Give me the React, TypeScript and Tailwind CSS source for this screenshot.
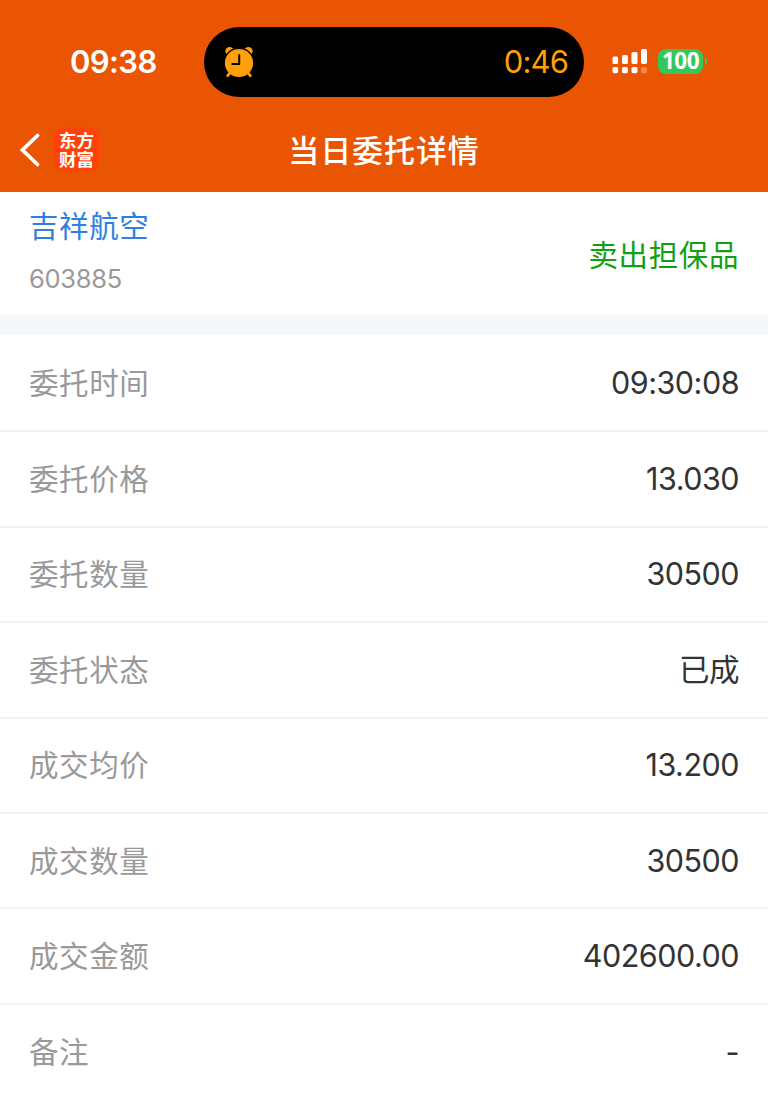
type Detail = {
  label: string;
  value: string;
};

const details: Detail[] = [
  { label: "委托时间", value: "09:30:08" },
  { label: "委托价格", value: "13.030" },
  { label: "委托数量", value: "30500" },
  { label: "委托状态", value: "已成" },
  { label: "成交均价", value: "13.200" },
  { label: "成交数量", value: "30500" },
  { label: "成交金额", value: "402600.00" },
  { label: "备注", value: "-" },
];

function AlarmIcon() {
  return (
    <svg className="h-8 w-8" viewBox="0 0 32 32" fill="none">
      <circle cx="6.6" cy="5.2" r="4.2" fill="#ff9f0a" />
      <circle cx="25.4" cy="5.2" r="4.2" fill="#ff9f0a" />
      <circle cx="16" cy="17" r="15.4" fill="#000" />
      <path d="M6.8 27.2 4.7 29.6M25.2 27.2l2.1 2.4" stroke="#ff9f0a" strokeWidth="2.8" strokeLinecap="round" />
      <circle cx="16" cy="17" r="14.1" fill="#ff9f0a" />
      <path d="M16.2 9v9H9.3" stroke="#000" strokeWidth="2" strokeLinecap="round" strokeLinejoin="round" />
    </svg>
  );
}

function SignalIcon() {
  return (
    <svg className="h-[26px] w-9" viewBox="0 0 36 26" fill="#fff">
      <rect x="0.5" y="8.5" width="5.6" height="7.5" rx="1.6" />
      <rect x="10" y="7" width="5.9" height="9" rx="1.6" />
      <rect x="19.5" y="4" width="6" height="12" rx="1.6" />
      <rect x="29" y="1" width="6" height="15" rx="1.8" />
      <rect x="0.5" y="18.9" width="5.6" height="6.3" rx="1.6" />
      <rect x="10" y="18.9" width="5.9" height="6.3" rx="1.6" />
      <rect x="19.5" y="18.9" width="6" height="6.3" rx="1.6" />
      <rect x="29" y="18.9" width="6" height="6.3" rx="1.6" opacity="0.3" />
    </svg>
  );
}

function StatusBar() {
  return (
    <div className="flex h-[124px] items-center">
      <p className="ml-[70px] w-[134px] pb-[2px] text-[31px] leading-none font-semibold tracking-[-0.6px]">09:38</p>
      <div className="flex h-[70px] w-[380px] items-center justify-between rounded-full bg-black pr-[16px] pl-[19px]">
        <AlarmIcon />
        <p className="pb-px text-[31px] leading-none tracking-[-0.9px] text-[#ff9f0a]">0:46</p>
      </div>
      <div className="ml-7 flex items-center">
        <div className="-mt-[2px]">
          <SignalIcon />
        </div>
        <div className="-mt-px ml-[10px] flex h-[25px] w-[45px] items-center justify-center rounded-[8px] bg-[#34c759] pb-px font-['Noto_Sans',sans-serif] text-[22.5px] leading-[22px] font-bold tracking-[-0.6px]">
          100
        </div>
        <div className="-mt-px ml-[2px] h-[7px] w-[2px] rounded-r-full bg-[#34c759]"></div>
      </div>
    </div>
  );
}

function NavBar() {
  return (
    <div className="grid h-[68px] grid-cols-[1fr_auto_1fr] items-start">
      <div className="flex items-center pt-[4px] pl-[19px]">
        <svg className="h-9 w-[22px]" viewBox="0 0 22 36" fill="none">
          <path d="M18.5 3.5 3.5 18 18.5 32.5" stroke="#fff" strokeWidth="3.8" strokeLinecap="round" strokeLinejoin="miter" />
        </svg>
        <div className="-mt-px ml-[13px] flex h-11 w-[45px] flex-col items-center justify-center rounded-[9px] bg-[#ff4209] font-['Noto_Sans_CJK_SC',sans-serif] text-[17.5px] leading-[19px] font-bold">
          <p>东方</p>
          <p>财富</p>
        </div>
      </div>
      <h1 className="pt-[4px] text-[31px] leading-[46px] font-medium tracking-[0.9px]">当日委托详情</h1>
    </div>
  );
}

export default function App() {
  return (
    <div className="h-[1100px] overflow-hidden bg-white font-['Inter','Noto_Sans_CJK_SC',sans-serif]">
      <header className="h-[192px] bg-[#ea5504] text-white">
        <StatusBar />
        <NavBar />
      </header>
      <section className="flex h-[123px] items-center justify-between px-[29px]">
        <div className="flex flex-col pb-[10px]">
          <p className="text-[29.5px] leading-[44px] tracking-[0.6px] text-[#2f7fe0]">吉祥航空</p>
          <p className="mt-[16px] text-[25.5px] leading-[30px] tracking-[-0.3px] text-[#999]">603885</p>
        </div>
        <p className="pt-[2px] text-[29.5px] leading-[44px] tracking-[0.6px] text-[#12a012]">卖出担保品</p>
      </section>
      <div className="h-5 bg-[#f6f7f9]"></div>
      <section>
        {details.map((detail) => (
          <div
            className="flex h-[95.4px] items-center justify-between border-b-2 border-[#f3f3f3] px-[29px] first:h-[97.4px] last:border-0"
            key={detail.label}
          >
            <p className="text-[29.5px] leading-[44px] tracking-[0.6px] text-[#999]">{detail.label}</p>
            <p className="text-[30.5px] leading-[44px] tracking-[-0.5px] text-[#333]">{detail.value}</p>
          </div>
        ))}
      </section>
    </div>
  );
}
